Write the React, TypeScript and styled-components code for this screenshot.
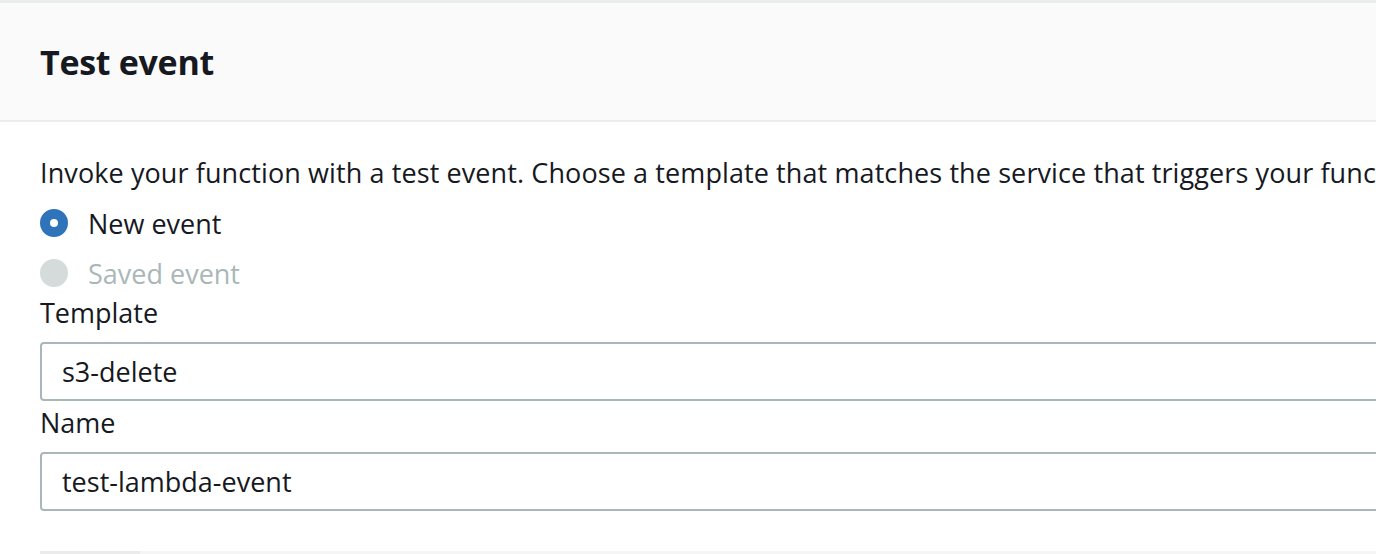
import React from "react";
import styled, { createGlobalStyle } from "styled-components";

const Global = createGlobalStyle`
  html, body { margin: 0; padding: 0; background: #ffffff; overflow: hidden; }
  body { font-family: "Open Sans", "Noto Sans", Arial, sans-serif; color: #16191f; }
`;

const Panel = styled.section`
  width: 1600px;
  border-top: 3px solid #eaeded;
  background: #ffffff;
`;

const Header = styled.header`
  height: 119px;
  box-sizing: border-box;
  background: #fafafa;
  border-bottom: 2px solid #eaeded;
  display: flex;
  align-items: center;
  padding: 0 40px;
`;

const Title = styled.h2`
  margin: 0;
  font-size: 34px;
  font-weight: 700;
  color: #16191f;
  letter-spacing: -0.3px;
`;

const Body = styled.div`
  display: flex;
  flex-direction: column;
  padding: 31px 40px 0;
`;

const Description = styled.p`
  margin: 0 0 5px;
  font-size: 27px;
  line-height: 40px;
  letter-spacing: 0.1px;
  white-space: nowrap;
  overflow: hidden;
`;

const RadioRow = styled.label<{ $disabled?: boolean }>`
  display: flex;
  align-items: center;
  gap: 20px;
  height: 50px;
  font-size: 27px;
  color: ${(p) => (p.$disabled ? "#aab7b8" : "#16191f")};
`;

const RadioDot = styled.span<{ $checked?: boolean; $disabled?: boolean }>`
  width: 28px;
  height: 28px;
  box-sizing: border-box;
  border-radius: 50%;
  flex: none;
  background: ${(p) => (p.$disabled ? "#d5dbdb" : "#ffffff")};
  border: ${(p) =>
    p.$checked ? "10px solid #2f74ba" : p.$disabled ? "none" : "2px solid #aab7b8"};
`;

const FieldLabel = styled.div<{ $gapTop?: number }>`
  font-size: 27px;
  line-height: 30px;
  margin-top: ${(p) => p.$gapTop ?? 0}px;
  margin-bottom: 14px;
`;

const Input = styled.div`
  height: 59px;
  box-sizing: border-box;
  border: 2px solid #aab7b8;
  border-radius: 4px;
  display: flex;
  align-items: center;
  padding: 0 20px;
  font-size: 27px;
  color: #16191f;
  background: #ffffff;
`;

const Tabs = styled.div`
  margin-top: 40px;
  display: flex;
  height: 3px;
  background: #f5f5f5;
`;

const ActiveTab = styled.div`
  width: 100px;
  background: #ebebeb;
`;

export default function App() {
  return (
    <>
      <Global />
      <Panel>
        <Header>
          <Title>Test event</Title>
        </Header>
        <Body>
          <Description>
            Invoke your function with a test event. Choose a template that matches the service that triggers your function.
          </Description>
          <RadioRow>
            <RadioDot $checked />
            New event
          </RadioRow>
          <RadioRow $disabled>
            <RadioDot $disabled />
            Saved event
          </RadioRow>
          <FieldLabel>Template</FieldLabel>
          <Input>s3-delete</Input>
          <FieldLabel $gapTop={7}>Name</FieldLabel>
          <Input>test-lambda-event</Input>
          <Tabs>
            <ActiveTab />
          </Tabs>
        </Body>
      </Panel>
    </>
  );
}
